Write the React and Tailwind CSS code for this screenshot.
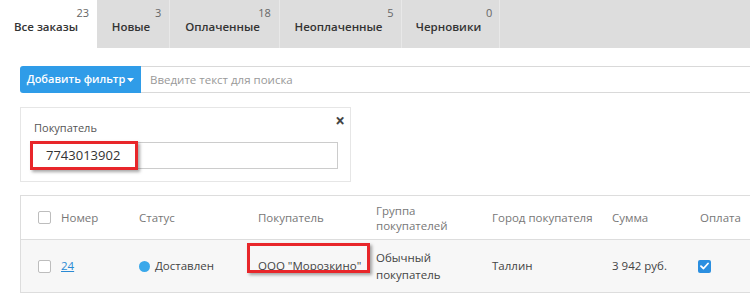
import React from 'react';

const tabs = [
  { label: 'Все заказы', count: 23, w: 'w-[97px]', active: true },
  { label: 'Новые', count: 3, w: 'w-[73px]' },
  { label: 'Оплаченные', count: 18, w: 'w-[110px]' },
  { label: 'Неоплаченные', count: 5, w: 'w-[122px]' },
  { label: 'Черновики', count: 0, w: 'w-[98px]' },
];

const Checkbox = ({ checked = false }) => (
  checked ? (
    <span className="w-[13px] h-[13px] rounded-[2px] bg-[#2b8fe0] flex items-center justify-center">
      <svg width="9" height="8" viewBox="0 0 9 8">
        <path d="M1 4.2 L3.5 6.5 L8 1.5" stroke="white" strokeWidth="1.8" fill="none" strokeLinecap="round" strokeLinejoin="round" />
      </svg>
    </span>
  ) : (
    <span className="w-[13px] h-[13px] rounded-[2px] border border-[#bdbdbd] bg-white" />
  )
);

const App = () => {
  return (
    <div className="w-[750px] h-[295px] overflow-hidden bg-white text-[#333] font-['Open_Sans',sans-serif]">
      {/* tabs */}
      <div className="flex h-[48px] bg-[#dddddd]">
        {tabs.map(tab => (
          <div
            key={tab.label}
            className={`${tab.w} h-full flex justify-center border-r ${tab.active ? 'bg-white border-transparent' : 'border-[#e8e8e8]'}`}
          >
            <div className="relative pt-[13px] pr-[4px]">
              <span className="text-[11.5px] font-semibold text-[#333] leading-[18px]">{tab.label}</span>
              <span className="absolute right-[-7px] top-[6px] text-[11px] leading-[13px] text-[#666]">{tab.count}</span>
            </div>
          </div>
        ))}
      </div>

      {/* search */}
      <div className="flex ml-[20px] mt-[18px] h-[27px]">
        <button className="w-[121px] h-full bg-[#2f9ce8] rounded-l-[3px] text-white text-[11px] font-semibold flex items-center justify-center gap-[2px]">
          Добавить фильтр
          <svg width="7" height="4" viewBox="0 0 7 4"><path d="M0 0 L7 0 L3.5 4 Z" fill="white" /></svg>
        </button>
        <div className="flex-1 border-y border-[#d9d9d9] flex items-center pl-[9px] text-[11.5px] text-[#999]">
          Введите текст для поиска
        </div>
      </div>

      {/* filter card */}
      <div className="relative ml-[20px] mt-[14px] w-[331px] h-[75px] border border-[#e6e6e6] px-[9px] pt-[12px]">
        <div className="pl-[4px] text-[11px] leading-[16px] text-[#555]">Покупатель</div>
        <div className="mt-[6px] w-[308px] h-[27px] border border-[#cccccc] flex items-center pl-[15px] text-[13px] text-[#333]">
          7743013902
        </div>
        <div className="absolute left-[9px] top-[33px] w-[108px] h-[29px] border-[3px] border-[#e8262a] shadow-[2px_2px_3px_rgba(0,0,0,0.35)]" />
        <span className="absolute right-[5px] top-[4px] text-[17px] font-bold text-[#444] leading-none">×</span>
      </div>

      {/* table */}
      <div className="ml-[20px] mt-[13px] border-l border-t border-b border-[#dddddd] text-[11.5px]">
        <div className="flex h-[44px] items-center text-[#777] border-b border-[#dddddd]">
          <div className="w-[118px] flex items-center pl-[17px] gap-[10px]">
            <Checkbox />
            <span>Номер</span>
          </div>
          <div className="w-[119px]">Статус</div>
          <div className="w-[118px]">Покупатель</div>
          <div className="w-[116px] leading-[15px]">Группа<br />покупателей</div>
          <div className="w-[120px]">Город покупателя</div>
          <div className="w-[88px]">Сумма</div>
          <div>Оплата</div>
        </div>
        <div className="flex h-[52px] items-center bg-[#f7f7f7] text-[#444]">
          <div className="w-[118px] flex items-center pl-[17px] gap-[10px]">
            <Checkbox />
            <span className="text-[#2a8ad4] underline">24</span>
          </div>
          <div className="w-[119px] flex items-center gap-[5px]">
            <span className="w-[11px] h-[11px] rounded-full bg-[#3aa8ea]" />
            <span>Доставлен</span>
          </div>
          <div className="w-[118px] relative">
            <span>ООО "Морозкино"</span>
            <div className="absolute left-[-11px] top-[-14px] w-[123px] h-[30px] border-[3px] border-[#e8262a] shadow-[2px_2px_3px_rgba(0,0,0,0.35)]" />
          </div>
          <div className="w-[116px] leading-[17px]">Обычный<br />покупатель</div>
          <div className="w-[120px]">Таллин</div>
          <div className="w-[88px]">3 942 руб.</div>
          <div className="-ml-[2px]"><Checkbox checked /></div>
        </div>
      </div>
    </div>
  );
};

export default App;
